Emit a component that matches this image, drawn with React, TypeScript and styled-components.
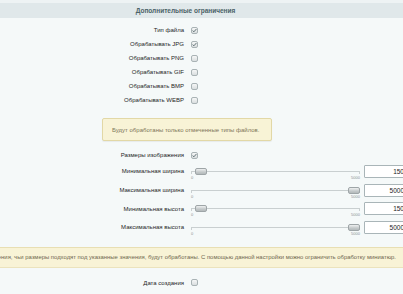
import React from "react";
import styled, { createGlobalStyle } from "styled-components";

const GlobalStyle = createGlobalStyle`
  html, body { margin: 0; padding: 0; background: #f5f9f9; overflow: hidden; }
  body { font-family: "Liberation Sans", Arial, sans-serif; }
`;

const Page = styled.div`
  width: 403px;
  height: 294px;
  overflow: hidden;
  background: #f5f9f9;
`;

const TopStrip = styled.div`
  height: 3px;
  background: #eef3f4;
`;

const Header = styled.div`
  height: 15px;
  background: #e0e8ea;
  display: flex;
  align-items: center;
  justify-content: center;
  padding-right: 32px;
  font-size: 6.5px;
  font-weight: bold;
  color: #4b6267;
`;

const Form = styled.div`
  padding-top: 5px;
  display: flex;
  flex-direction: column;
`;

const Row = styled.div<{ $h: number; $mt?: number }>`
  display: grid;
  grid-template-columns: 184px 1fr;
  column-gap: 7px;
  align-items: center;
  height: ${(p) => p.$h}px;
  margin-top: ${(p) => p.$mt ?? 0}px;
`;

const Label = styled.div`
  text-align: right;
  font-size: 6px;
  color: #1e1e1e;
  white-space: nowrap;
`;

const Box = styled.span<{ $checked?: boolean }>`
  width: 7px;
  height: 7px;
  box-sizing: border-box;
  border: 1px solid #a9b3b5;
  border-radius: 2px;
  background: linear-gradient(#f6f7f7, #d9dedf);
  display: flex;
  align-items: center;
  justify-content: center;
`;

const Checkbox = ({ checked }: { checked?: boolean }) => (
  <Box $checked={checked}>
    {checked && (
      <svg width="5" height="5" viewBox="0 0 5 5">
        <polyline points="0.6,2.6 1.9,3.8 4.4,1" fill="none" stroke="#55676b" strokeWidth="0.9" />
      </svg>
    )}
  </Box>
);

const Notice = styled.div`
  margin: 11px 0 0 102px;
  width: 170px;
  height: 23px;
  box-sizing: border-box;
  border: 1px solid #e2d8a6;
  border-radius: 2px;
  background: #f8f3d6;
  box-shadow: 0 1px 1px rgba(0, 0, 0, 0.06);
  display: flex;
  align-items: center;
  padding-left: 9px;
  font-size: 6px;
  color: #7d7457;
  white-space: nowrap;
`;

const WideNotice = styled.div`
  margin-top: 10px;
  height: 21px;
  box-sizing: border-box;
  border-top: 1px solid #e8dfb3;
  border-bottom: 1px solid #ebe3bd;
  background: #f8f3d6;
  display: flex;
  align-items: center;
  justify-content: flex-end;
  padding-right: 7px;
  overflow: hidden;
  font-size: 5.9px;
  color: #6f6750;
  white-space: nowrap;
`;

const Control = styled.div`
  display: flex;
  align-items: center;
  gap: 4px;
`;

const SliderBox = styled.div`
  width: 169px;
  padding-top: 5px;
  display: flex;
  flex-direction: column;
`;

const TrackZone = styled.div`
  position: relative;
  height: 7px;
`;

const TrackLine = styled.div`
  position: absolute;
  left: 0;
  right: 0;
  top: 3px;
  height: 3px;
  box-sizing: border-box;
  border: 1px solid #c9cfd0;
  border-bottom: none;
`;

const Handle = styled.div`
  position: absolute;
  top: 0;
  width: 12px;
  height: 7px;
  box-sizing: border-box;
  border: 1px solid #9ea5a7;
  border-radius: 2px;
  background: linear-gradient(#eef0f0, #c4c9ca 60%, #b4babb);
`;

const Scale = styled.div`
  height: 5px;
  display: flex;
  justify-content: space-between;
  align-items: center;
  font-size: 4px;
  color: #8a9092;
`;

const NumInput = styled.input`
  width: 46px;
  height: 13px;
  box-sizing: border-box;
  border: 1px solid #a9b5b8;
  border-radius: 1px;
  background: #fff;
  padding: 0 5px 0 0;
  margin: 0;
  text-align: right;
  font-family: "Liberation Sans", Arial, sans-serif;
  font-size: 6.5px;
  color: #222;
  outline: none;
`;

const Slider = ({ value }: { value: number }) => (
  <Control>
    <SliderBox>
      <TrackZone>
        <TrackLine />
        <Handle style={{ left: `${4 + ((value - 150) / (5000 - 150)) * 153}px` }} />
      </TrackZone>
      <Scale>
        <span>0</span>
        <span>5000</span>
      </Scale>
    </SliderBox>
    <NumInput defaultValue={String(value)} readOnly />
  </Control>
);

const types = [
  { label: "Тип файла", checked: true },
  { label: "Обрабатывать JPG", checked: true },
  { label: "Обрабатывать PNG", checked: false },
  { label: "Обрабатывать GIF", checked: false },
  { label: "Обрабатывать BMP", checked: false },
  { label: "Обрабатывать WEBP", checked: false },
];

const sizes = [
  { label: "Минимальная ширина", value: 150 },
  { label: "Максимальная ширина", value: 5000 },
  { label: "Минимальная высота", value: 150 },
  { label: "Максимальная высота", value: 5000 },
];

export default function App() {
  return (
    <Page>
      <GlobalStyle />
      <TopStrip />
      <Header>Дополнительные ограничения</Header>
      <Form>
        {types.map((t) => (
          <Row key={t.label} $h={14}>
            <Label>{t.label}</Label>
            <Checkbox checked={t.checked} />
          </Row>
        ))}
        <Notice>Будут обработаны только отмеченные типы файлов.</Notice>
        <Row $h={14} $mt={7}>
          <Label>Размеры изображения</Label>
          <Checkbox checked />
        </Row>
        {sizes.map((s) => (
          <Row key={s.label} $h={18.7}>
            <Label>{s.label}</Label>
            <Slider value={s.value} />
          </Row>
        ))}
        <WideNotice>
          Только изображения, чьи размеры подходят под указанные значения, будут обработаны. С помощью данной настройки можно ограничить обработку миниатюр.
        </WideNotice>
        <Row $h={14} $mt={8}>
          <Label>Дата создания</Label>
          <Checkbox />
        </Row>
      </Form>
    </Page>
  );
}
